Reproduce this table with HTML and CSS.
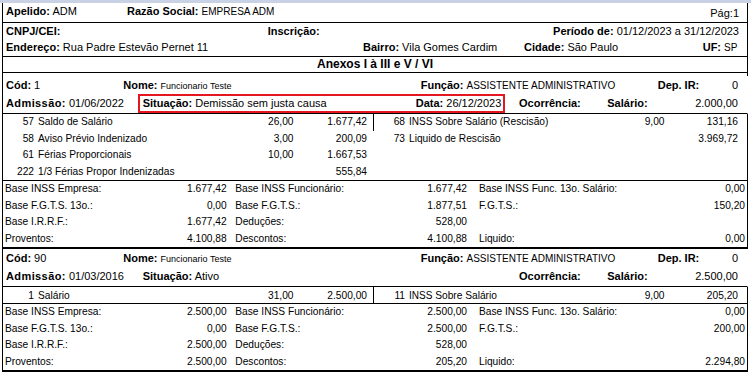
FILE: index.html
```html
<!DOCTYPE html>
<html lang="pt-BR">
<head>
    <meta charset="UTF-8">
    <meta name="viewport" content="width=device-width, initial-scale=1.0">
    <title>Rescisão - Anexos I à III e V / VI</title>
    <link rel="stylesheet" href="styles.css">
</head>
<body>

<div class="faixa"></div>

<div class="folha">
    <!-- Cabeçalho da empresa -->
    <div class="linha cab-a">
        <span><b>Apelido:</b> ADM</span>
        <span><b>Razão Social:</b> <span class="mai">EMPRESA ADM</span></span>
        <span class="pag">Pág:1</span>
    </div>
    <div class="linha cab-b">
        <span><b>CNPJ/CEI:</b></span>
        <span><b>Inscrição:</b></span>
        <span><b>Período de:</b> 01/12/2023 a 31/12/2023</span>
    </div>
    <div class="linha cab-c">
        <span><b>Endereço:</b> Rua Padre Estevão Pernet 11</span>
        <span><b>Bairro:</b> Vila Gomes Cardim</span>
        <span><b>Cidade:</b> São Paulo</span>
        <span><b>UF:</b> <span class="mai">SP</span></span>
    </div>
    <div class="linha titulo">Anexos I à III e V / VI</div>
    <div class="linha espaco"></div>

    <!-- Funcionário 1 -->
    <div class="linha func">
        <div class="f1">
            <span><b>Cód:</b> 1</span>
            <span><b>Nome:</b> <small>Funcionario Teste</small></span>
            <span><b>Função:</b> <span class="mai">ASSISTENTE ADMINISTRATIVO</span></span>
            <span class="ponta"><b>Dep. IR:</b> <span>0</span></span>
        </div>
        <div class="f2">
            <span><b class="adm">Admissão:</b> 01/06/2022</span>
            <span><b>Situação:</b> Demissão sem justa causa</span>
            <span><b>Data:</b> 26/12/2023</span>
            <span><b>Ocorrência:</b></span>
            <span class="ponta"><b>Salário:</b> <span>2.000,00</span></span>
        </div>
        <div class="marca"></div>
    </div>

    <div class="linha itens">
        <div class="item primeira">
            <div class="meia col-esq"><span class="cod">57</span><span class="desc">Saldo de Salário</span><span class="qtd">26,00</span><span class="val">1.677,42</span></div>
            <div class="meia col-dir"><span class="cod">68</span><span class="desc"><span class="mai">INSS</span> Sobre Salário (Rescisão)</span><span class="qtd">9,00</span><span class="val">131,16</span></div>
        </div>
        <div class="item">
            <div class="meia col-esq"><span class="cod">58</span><span class="desc">Aviso Prévio Indenizado</span><span class="qtd">3,00</span><span class="val">200,09</span></div>
            <div class="meia col-dir"><span class="cod">73</span><span class="desc">Liquido de Rescisão</span><span class="qtd"></span><span class="val">3.969,72</span></div>
        </div>
        <div class="item">
            <div class="meia col-esq"><span class="cod">61</span><span class="desc">Férias Proporcionais</span><span class="qtd">10,00</span><span class="val">1.667,53</span></div>
            <div class="meia col-dir"></div>
        </div>
        <div class="item">
            <div class="meia col-esq"><span class="cod">222</span><span class="desc">1/3 Férias Propor Indenizadas</span><span class="qtd"></span><span class="val">555,84</span></div>
            <div class="meia col-dir"></div>
        </div>
    </div>

    <div class="linha bases">
        <div class="par"><span>Base INSS Empresa:</span><span>1.677,42</span></div>
        <div class="par"><span>Base INSS Funcionário:</span><span>1.677,42</span></div>
        <div class="par"><span>Base INSS Func. 13o. Salário:</span><span>0,00</span></div>
        <div class="par"><span>Base F.G.T.S. 13o.:</span><span>0,00</span></div>
        <div class="par"><span>Base F.G.T.S.:</span><span>1.877,51</span></div>
        <div class="par"><span>F.G.T.S.:</span><span>150,20</span></div>
        <div class="par"><span>Base I.R.R.F.:</span><span>1.677,42</span></div>
        <div class="par"><span>Deduções:</span><span>528,00</span></div>
        <div class="par"></div>
        <div class="par"><span>Proventos:</span><span>4.100,88</span></div>
        <div class="par"><span>Descontos:</span><span>4.100,88</span></div>
        <div class="par"><span>Liquido:</span><span>0,00</span></div>
    </div>

    <!-- Funcionário 2 -->
    <div class="linha func">
        <div class="f1">
            <span><b>Cód:</b> 90</span>
            <span><b>Nome:</b> <small>Funcionario Teste</small></span>
            <span><b>Função:</b> <span class="mai">ASSISTENTE ADMINISTRATIVO</span></span>
            <span class="ponta"><b>Dep. IR:</b> <span>0</span></span>
        </div>
        <div class="f2">
            <span><b class="adm">Admissão:</b> 01/03/2016</span>
            <span><b>Situação:</b> Ativo</span>
            <span></span>
            <span><b>Ocorrência:</b></span>
            <span class="ponta"><b>Salário:</b> <span>2.500,00</span></span>
        </div>
    </div>

    <div class="linha itens curto">
        <div class="item primeira">
            <div class="meia col-esq"><span class="cod">1</span><span class="desc">Salário</span><span class="qtd">31,00</span><span class="val">2.500,00</span></div>
            <div class="meia col-dir"><span class="cod">11</span><span class="desc"><span class="mai">INSS</span> Sobre Salário</span><span class="qtd">9,00</span><span class="val">205,20</span></div>
        </div>
    </div>

    <div class="linha bases">
        <div class="par"><span>Base INSS Empresa:</span><span>2.500,00</span></div>
        <div class="par"><span>Base INSS Funcionário:</span><span>2.500,00</span></div>
        <div class="par"><span>Base INSS Func. 13o. Salário:</span><span>0,00</span></div>
        <div class="par"><span>Base F.G.T.S. 13o.:</span><span>0,00</span></div>
        <div class="par"><span>Base F.G.T.S.:</span><span>2.500,00</span></div>
        <div class="par"><span>F.G.T.S.:</span><span>200,00</span></div>
        <div class="par"><span>Base I.R.R.F.:</span><span>2.500,00</span></div>
        <div class="par"><span>Deduções:</span><span>528,00</span></div>
        <div class="par"></div>
        <div class="par"><span>Proventos:</span><span>2.500,00</span></div>
        <div class="par"><span>Descontos:</span><span>205,20</span></div>
        <div class="par"><span>Liquido:</span><span>2.294,80</span></div>
    </div>
</div>

</body>
</html>
```

FILE: styles.css
```css
/* Relatório de rescisão - layout da folha */
* {
    box-sizing: border-box;
}
body {
    margin: 0;
    background: #fff;
    color: #000;
    font-family: "Liberation Sans", Arial, sans-serif;
    font-size: 11px;
}
b {
    font-weight: bold;
}
small {
    font-size: 9px;
}
/* textos em caixa alta saem mais estreitos no relatório */
.mai {
    font-size: 10px;
}

/* faixa cinza-azulada do topo da janela */
.faixa {
    height: 3px;
    background: #c9d2e4;
}
.folha {
    margin-left: 2px;
    width: 746px;
}
.linha {
    border-left: 1px solid #000;
    border-right: 1px solid #000;
}

/* Cabeçalho */
.cab-a {
    display: grid;
    grid-template-columns: 121px 1fr auto;
    height: 20px;
    line-height: 16px;
    padding: 0 8px 0 3px;
    border-bottom: 1px solid #000;
}
.pag {
    padding-top: 2px;
}
.cab-b {
    display: grid;
    grid-template-columns: 261.7px 1fr auto;
    height: 16px;
    line-height: 16px;
    padding: 0 8px 0 3px;
}
.cab-c {
    display: grid;
    grid-template-columns: 357px 161px 178.7px auto;
    height: 18px;
    line-height: 16px;
    padding: 0 8px 0 3px;
    border-bottom: 1px solid #000;
}
.titulo {
    height: 16px;
    line-height: 14px;
    font-size: 12px;
    font-weight: bold;
    text-align: center;
    border-bottom: 1px solid #000;
}
.espaco {
    height: 3px;
}

/* Dados do funcionário */
.func {
    position: relative;
    padding: 0 9px 0 3px;
    border-right-color: transparent;
    border-bottom: 1px solid #000;
}
.f1 {
    display: grid;
    grid-template-columns: 117.3px 297.4px 237px 1fr;
    height: 18px;
    padding-top: 1px;
    line-height: 17px;
}
.f2 {
    display: grid;
    grid-template-columns: 136.7px 273px 103.3px 88.3px 1fr;
    height: 19px;
    line-height: 19px;
}
.ponta {
    display: flex;
    justify-content: space-between;
}
.adm {
    letter-spacing: 0.4px;
}
/* destaque vermelho sobre situação/data */
.marca {
    position: absolute;
    left: 135px;
    top: 18px;
    width: 367px;
    height: 19px;
    border: 2px solid #e5161f;
}

/* Verbas */
.itens {
    font-size: 10.2px;
    border-bottom: 1px solid #000;
}
.item {
    display: grid;
    grid-template-columns: 371px 1fr;
    height: 16.5px;
    line-height: 16.5px;
}
.curto .item {
    height: 16px;
    line-height: 17px;
}
.curto {
    height: 17px;
}
.meia {
    display: grid;
    grid-template-columns: 31px 1fr 60px 73.5px;
    white-space: nowrap;
}
.col-esq {
    padding-right: 6px;
    border-right: 1px solid transparent;
}
.primeira .col-esq {
    border-right-color: #000;
}
.col-dir {
    padding-right: 9px;
}
.cod,
.qtd,
.val {
    text-align: right;
}
.desc {
    padding-left: 4px;
}

/* Bases e totais */
.bases {
    display: grid;
    grid-template-columns: 230.3px 243.7px 1fr;
    grid-auto-rows: 16.5px;
    line-height: 16.5px;
    height: 68px;
    padding: 0 2px;
    font-size: 10.2px;
    border-bottom: 2px solid #000;
}
.par {
    display: flex;
    justify-content: space-between;
    white-space: nowrap;
}
.bases .par:nth-child(3n+1) {
    padding-right: 8.6px;
}
.bases .par:nth-child(3n+2) {
    padding-right: 12px;
}
```
